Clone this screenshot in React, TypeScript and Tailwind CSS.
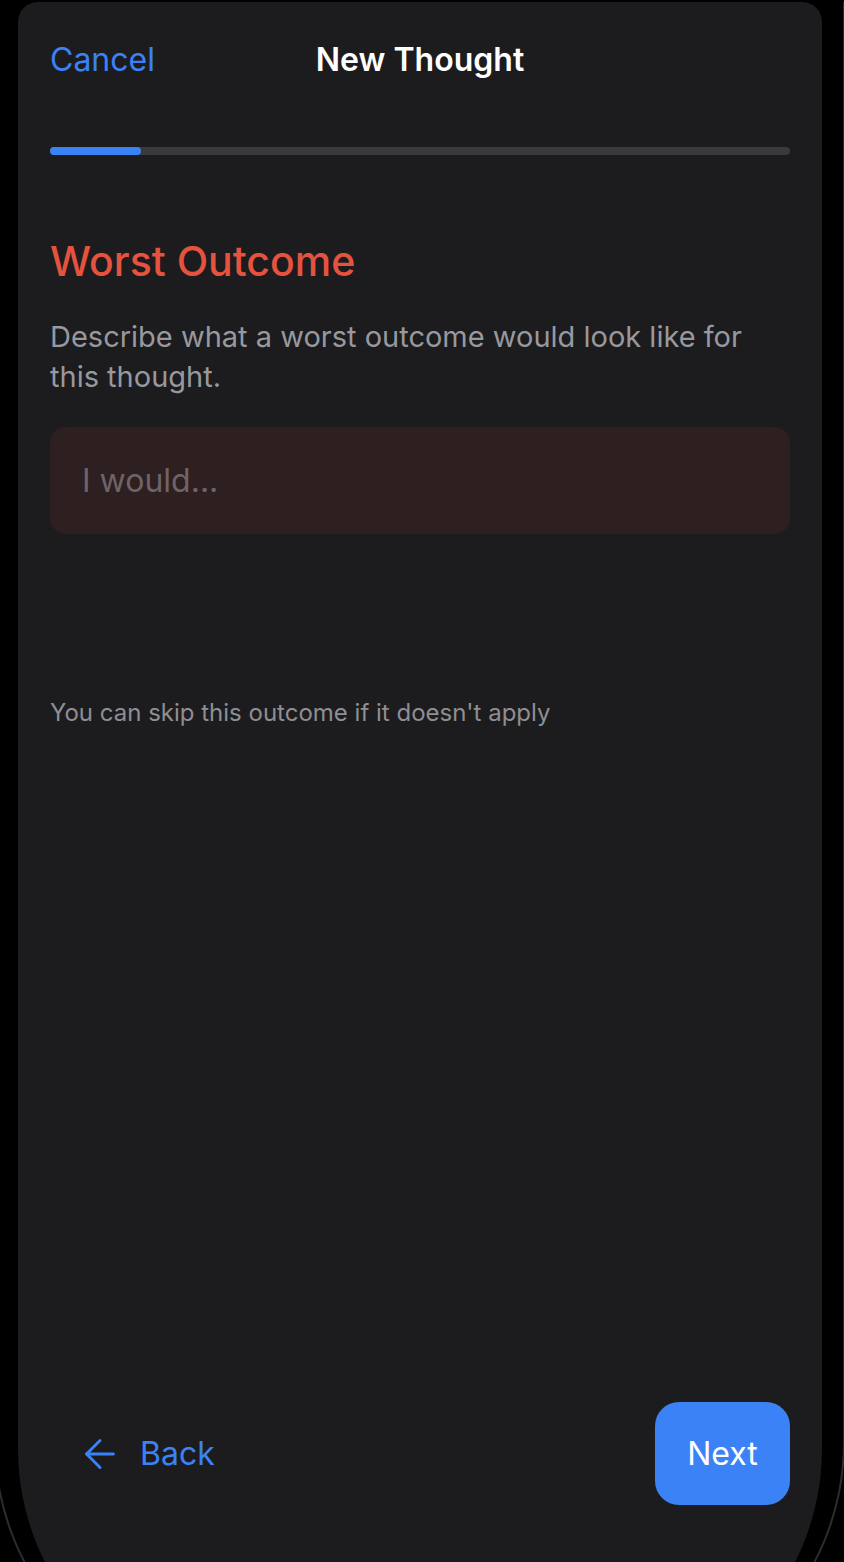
import { ArrowLeft } from "lucide-react";

export default function App() {
  return (
    <div className="h-[1562px] w-[844px] overflow-hidden bg-black font-['Inter',sans-serif]">
      <div className="ml-[-6px] h-[1700px] w-[851px] rounded-b-[260px] border-r-2 border-b-2 border-l-2 border-[#2c2c2e] bg-black pl-[22px]">
        <div className="mt-[2px] flex h-[1697px] w-[804px] flex-col rounded-t-[20px] rounded-b-[250px] bg-[#1c1c1e] px-[32px] pt-[38px]">
          {/* header */}
          <div className="grid h-[40px] grid-cols-[1fr_auto_1fr] items-center">
            <span className="text-[32px] leading-[40px] text-[#3b82f6]">Cancel</span>
            <span className="text-[32px] leading-[40px] font-semibold text-white">New Thought</span>
            <span />
          </div>

          {/* progress */}
          <div className="mt-[67px] h-[8px] w-full rounded-full bg-[#3a3a3c]">
            <div className="h-full w-[91px] rounded-full bg-[#3b82f6]" />
          </div>

          <h1 className="mt-[82px] text-[41px] leading-[48px] font-medium text-[#e5533f]">Worst Outcome</h1>
          <p className="mt-[32px] text-[29px] leading-[40px] text-[#98989f]">
            Describe what a worst outcome would look like for this thought.
          </p>

          <div className="mt-[30px] flex h-[107px] items-center rounded-[16px] bg-[#2e1f21] px-[32px]">
            <span className="text-[32px] leading-[40px] text-[#6e6367]">I would...</span>
          </div>

          <p className="mt-[164px] text-[24px] leading-[30px] text-[#8e8e93]">You can skip this outcome if it doesn't apply</p>

          {/* footer */}
          <div className="mt-[674px] flex items-center justify-between">
            <button className="ml-[27px] flex items-center gap-[17px] text-[#3b82f6]">
              <ArrowLeft size={46} strokeWidth={1.5} />
              <span className="text-[32px]">Back</span>
            </button>
            <button className="flex h-[103px] w-[135px] items-center justify-center rounded-[24px] bg-[#3b82f6] text-[32px] text-white">
              Next
            </button>
          </div>
        </div>
      </div>
    </div>
  );
}
